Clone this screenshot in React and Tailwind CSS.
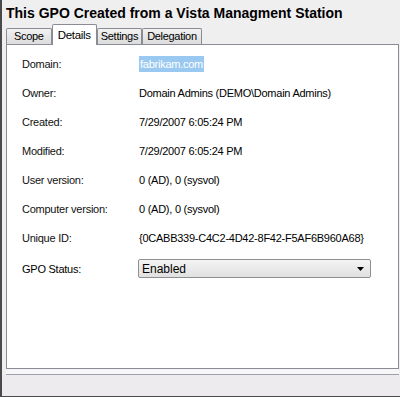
export default function App() {
  const rows = [
    ['Domain:', 'fabrikam.com', true],
    ['Owner:', 'Domain Admins (DEMO\\Domain Admins)'],
    ['Created:', '7/29/2007 6:05:24 PM'],
    ['Modified:', '7/29/2007 6:05:24 PM'],
    ['User version:', '0 (AD), 0 (sysvol)'],
    ['Computer version:', '0 (AD), 0 (sysvol)'],
    ['Unique ID:', '{0CABB339-C4C2-4D42-8F42-F5AF6B960A68}'],
  ]
  const tabs = [
    ['Scope', 'px-[7px]'],
    ['Details', 'px-[5px]'],
    ['Settings', 'px-[3px]'],
    ['Delegation', 'px-[4px]'],
  ]

  return (
    <div className="w-[400px] h-[397px] bg-[#f0eff0] border-l-2 border-b border-[#4a4a4a] flex flex-col overflow-hidden text-black" style={{ fontFamily: 'Tahoma, "Liberation Sans", Arial, sans-serif' }}>
      {/* Title */}
      <div className="h-[24px] pl-[4px] pt-[5px] text-[14px] font-bold leading-[16px] whitespace-nowrap">
        This GPO Created from a Vista Managment Station
      </div>

      {/* Tabs */}
      <div className="flex items-end h-[20px] pl-[4px] tracking-[-0.3px]">
        {tabs.map(([t, pad]) =>
          t === 'Details' ? (
            <div key={t} className={`h-[21px] -mb-px relative z-10 ${pad} pt-[3px] bg-white border border-b-0 border-[#898c95] rounded-t-[2px] text-[11.5px] leading-[15px]`}>
              {t}
            </div>
          ) : (
            <div key={t} className={`h-[16px] ${pad} bg-gradient-to-b from-[#f2f2f2] to-[#dcdcdc] border border-b-0 border-[#898c95] rounded-t-[2px] text-[11px] leading-[15px]`}>
              {t}
            </div>
          )
        )}
      </div>

      {/* Panel */}
      <div className="ml-[4px] mr-px h-[325px] bg-white border border-[#898c95] pt-[12px] pl-[15px] text-[11px] tracking-[-0.25px]">
        {rows.map(([label, value, sel]) => (
          <div key={label} className="flex h-[29px] items-start">
            <div className="w-[117px] leading-[14px] text-[#111]">{label}</div>
            <div className="leading-[14px]">
              {sel ? <span className="inline-block bg-[#99c9f0] text-white px-px py-px -my-px leading-[14px]">{value}</span> : value}
            </div>
          </div>
        ))}
        <div className="flex items-center -mt-[1px]">
          <div className="w-[116px] leading-[14px]">GPO Status:</div>
          <div className="w-[233px] h-[19px] border border-[#8e8f8f] rounded-[2px] bg-gradient-to-b from-[#f4f4f4] to-[#e0e0e0] flex items-center justify-between pl-[3px] pr-[6px] text-[12px] tracking-normal">
            <span>Enabled</span>
            <svg width="7" height="4" viewBox="0 0 7 4"><path d="M0 0h7L3.5 4z" fill="#000" /></svg>
          </div>
        </div>
      </div>

      <div className="h-[6px] ml-[4px] mr-px border-b border-[#a0a0a8] bg-[#f6f6f8]" />
      <div className="flex-1 bg-[#edebed]" />
    </div>
  )
}
